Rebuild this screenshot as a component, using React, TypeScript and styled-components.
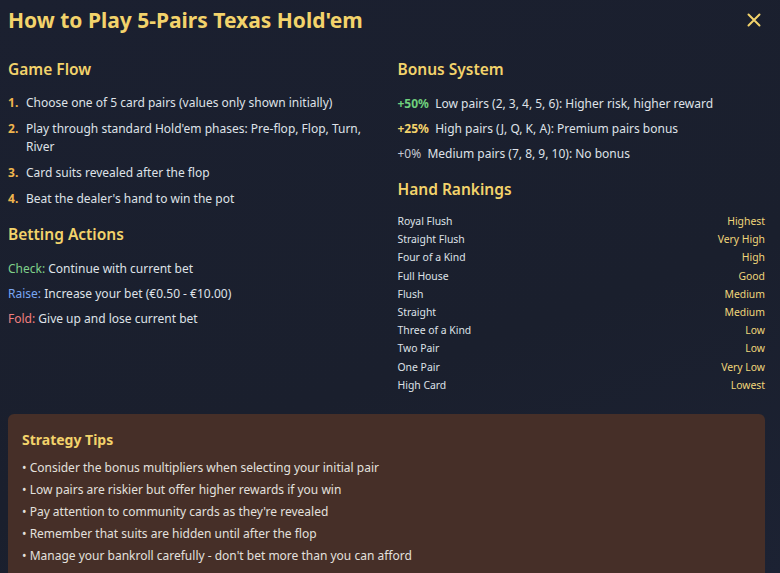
import React from "react";
import styled, { createGlobalStyle } from "styled-components";

const GlobalStyle = createGlobalStyle`
  html, body {
    margin: 0;
    padding: 0;
    background: #1a1f2e;
  }
  body {
    font-family: "Noto Sans", "Open Sans", sans-serif;
    color: #dfe2e8;
  }
  * { box-sizing: border-box; }
`;

const Page = styled.div`
  min-height: 573px;
  padding: 6px 15px 0 8px;
  background: linear-gradient(160deg, #1b2030 0%, #1a1f2d 60%, #1c2233 100%);
  overflow: hidden;
`;

const Header = styled.div`
  display: flex;
  justify-content: space-between;
  align-items: center;
  height: 28px;
`;

const Title = styled.h1`
  margin: 0;
  font-size: 21px;
  line-height: 28px;
  font-weight: 700;
  color: #f3d36b;
`;

const CloseButton = styled.button`
  width: 22px;
  height: 22px;
  padding: 0;
  border: none;
  background: none;
  display: flex;
  align-items: center;
  justify-content: center;
  color: #f3d36b;
  cursor: pointer;
`;

const Columns = styled.div`
  display: grid;
  grid-template-columns: 1fr 1fr;
  column-gap: 22px;
  margin-top: 24px;
  align-items: start;
`;

const Column = styled.div`
  display: flex;
  flex-direction: column;
`;

const SectionTitle = styled.h2<{ $spaced?: boolean }>`
  margin: ${(p) => (p.$spaced ? "15px" : "0")} 0 14px;
  font-size: 15.5px;
  line-height: 22px;
  font-weight: 600;
  color: #f3d36b;
`;

const StepList = styled.ol`
  list-style: none;
  margin: 0;
  padding: 0;
  display: flex;
  flex-direction: column;
  gap: 8px;
`;

const Step = styled.li`
  display: flex;
  font-size: 12px;
  line-height: 18px;
`;

const StepNum = styled.span`
  flex: 0 0 18px;
  font-weight: 700;
  color: #f0b54e;
`;

const LineList = styled.div`
  display: flex;
  flex-direction: column;
  gap: 7px;
  padding-top: 1px;
`;

const Line = styled.div`
  font-size: 12px;
  line-height: 18px;
`;

const Label = styled.span<{ $color: string; $bold?: boolean }>`
  color: ${(p) => p.$color};
  font-weight: ${(p) => (p.$bold ? 700 : 400)};
`;

const Rankings = styled.div`
  display: flex;
  flex-direction: column;
  margin-top: -2px;
`;

const RankRow = styled.div`
  display: flex;
  justify-content: space-between;
  font-size: 10.4px;
  line-height: 18.2px;
  color: #dfe2e8;
`;

const RankValue = styled.span`
  color: #f0d67a;
`;

const TipsBox = styled.section`
  margin-top: 20px;
  padding: 16px 14px 12px;
  background: #462f28;
  border-radius: 6px;
`;

const TipsTitle = styled.h3`
  margin: 0 0 7px;
  font-size: 14px;
  line-height: 20px;
  font-weight: 700;
  color: #f3d36b;
`;

const TipList = styled.ul`
  list-style: none;
  margin: 0;
  padding: 0;
`;

const Tip = styled.li`
  font-size: 12px;
  line-height: 22px;
  color: #e3e0de;
`;

const steps = [
  "Choose one of 5 card pairs (values only shown initially)",
  "Play through standard Hold'em phases: Pre-flop, Flop, Turn, River",
  "Card suits revealed after the flop",
  "Beat the dealer's hand to win the pot",
];

const rankings: [string, string][] = [
  ["Royal Flush", "Highest"],
  ["Straight Flush", "Very High"],
  ["Four of a Kind", "High"],
  ["Full House", "Good"],
  ["Flush", "Medium"],
  ["Straight", "Medium"],
  ["Three of a Kind", "Low"],
  ["Two Pair", "Low"],
  ["One Pair", "Very Low"],
  ["High Card", "Lowest"],
];

const tips = [
  "Consider the bonus multipliers when selecting your initial pair",
  "Low pairs are riskier but offer higher rewards if you win",
  "Pay attention to community cards as they're revealed",
  "Remember that suits are hidden until after the flop",
  "Manage your bankroll carefully - don't bet more than you can afford",
];

export default function App() {
  return (
    <Page>
      <GlobalStyle />
      <Header>
        <Title>How to Play 5-Pairs Texas Hold'em</Title>
        <CloseButton aria-label="Close">
          <svg width="16" height="16" viewBox="0 0 16 16" fill="none" stroke="currentColor" strokeWidth="2" strokeLinecap="round">
            <path d="M2.5 2.5 L13.5 13.5 M13.5 2.5 L2.5 13.5" />
          </svg>
        </CloseButton>
      </Header>

      <Columns>
        <Column>
          <SectionTitle>Game Flow</SectionTitle>
          <StepList>
            {steps.map((s, i) => (
              <Step key={i}>
                <StepNum>{i + 1}.</StepNum>
                <span>{s}</span>
              </Step>
            ))}
          </StepList>

          <SectionTitle $spaced>Betting Actions</SectionTitle>
          <LineList>
            <Line>
              <Label $color="#7fd08a">Check:</Label> Continue with current bet
            </Line>
            <Line>
              <Label $color="#79a6f2">Raise:</Label> Increase your bet (€0.50 - €10.00)
            </Line>
            <Line>
              <Label $color="#f07f7f">Fold:</Label> Give up and lose current bet
            </Line>
          </LineList>
        </Column>

        <Column>
          <SectionTitle>Bonus System</SectionTitle>
          <LineList>
            <Line>
              <Label $color="#6fd07d" $bold>+50%</Label>&nbsp; Low pairs (2, 3, 4, 5, 6): Higher risk, higher reward
            </Line>
            <Line>
              <Label $color="#f3d36b" $bold>+25%</Label>&nbsp; High pairs (J, Q, K, A): Premium pairs bonus
            </Line>
            <Line>
              <Label $color="#c5c9d2">+0%</Label>&nbsp; Medium pairs (7, 8, 9, 10): No bonus
            </Line>
          </LineList>

          <SectionTitle $spaced>Hand Rankings</SectionTitle>
          <Rankings>
            {rankings.map(([hand, value]) => (
              <RankRow key={hand}>
                <span>{hand}</span>
                <RankValue>{value}</RankValue>
              </RankRow>
            ))}
          </Rankings>
        </Column>
      </Columns>

      <TipsBox>
        <TipsTitle>Strategy Tips</TipsTitle>
        <TipList>
          {tips.map((t) => (
            <Tip key={t}>• {t}</Tip>
          ))}
        </TipList>
      </TipsBox>
    </Page>
  );
}
